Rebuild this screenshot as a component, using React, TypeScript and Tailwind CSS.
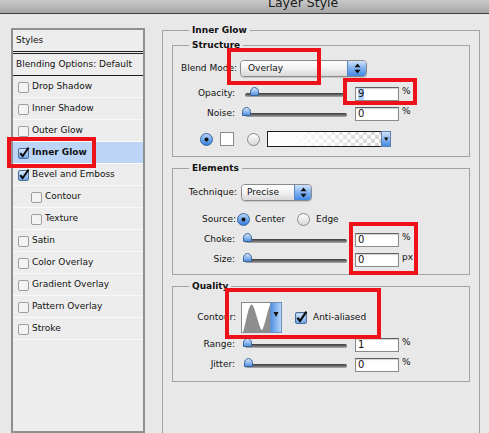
import React from "react";

function Check({ checked, big }: { checked: boolean; big?: boolean }) {
  const s = big ? 13 : 12;
  if (!checked)
    return (
      <svg width={s} height={s} viewBox="0 0 12 12" className="shrink-0">
        <rect x="0.5" y="1.5" width="10" height="10" rx="1.5" fill="#f3f3f3" stroke="#9d9d9d" />
      </svg>
    );
  return (
    <svg width={s} height={s} viewBox="0 0 12 12" className="shrink-0 overflow-visible">
      <defs>
        <linearGradient id="cbg" x1="0" y1="0" x2="0" y2="1">
          <stop offset="0" stopColor="#dcebfd" />
          <stop offset="1" stopColor="#6da4e8" />
        </linearGradient>
      </defs>
      <rect x="0.5" y="1.5" width="10" height="10" rx="1.5" fill="url(#cbg)" stroke="#4a6d9c" />
      <path d="M2.2 6.2 L4.6 9.2 L10.6 0.6" fill="none" stroke="#0a0a0a" strokeWidth="2" />
    </svg>
  );
}

function Radio({ on }: { on: boolean }) {
  return (
    <svg width="13" height="13" viewBox="0 0 13 13" className="shrink-0">
      <defs>
        <linearGradient id="ron" x1="0" y1="0" x2="0" y2="1">
          <stop offset="0" stopColor="#b9d8fb" />
          <stop offset="1" stopColor="#2f78de" />
        </linearGradient>
        <linearGradient id="roff" x1="0" y1="0" x2="0" y2="1">
          <stop offset="0" stopColor="#ffffff" />
          <stop offset="1" stopColor="#d6d6d6" />
        </linearGradient>
      </defs>
      <circle cx="6.5" cy="6.5" r="6" fill={on ? "url(#ron)" : "url(#roff)"} stroke={on ? "#3c659e" : "#8a8a8a"} />
      {on && <circle cx="6.5" cy="6.5" r="2" fill="#111" />}
    </svg>
  );
}

function Popup({ label, w, btn, pl }: { label: string; w: string; btn: string; pl: string }) {
  return (
    <div className={`${w} h-[17px] flex rounded-[4px] border border-[#8a8a8a] overflow-hidden shadow-[0_1px_1px_rgba(0,0,0,0.15)]`}>
      <div className={`flex-1 flex items-center ${pl} bg-linear-to-b from-[#ffffff] via-[#f1f1f1] to-[#d8d8d8]`}>
        {label}
      </div>
      <div className={`${btn} flex items-center justify-center bg-linear-to-b from-[#cfe3fb] via-[#7fb1ef] to-[#3f87e2] border-l border-[#5a86c0]`}>
        <svg width="7" height="11" viewBox="0 0 7 11">
          <path d="M3.5 0.5 L6.5 4.2 H0.5Z M3.5 10.5 L6.5 6.8 H0.5Z" fill="#111" />
        </svg>
      </div>
    </div>
  );
}

function Field({ value, sel }: { value: string; sel?: boolean }) {
  return (
    <div className="w-[44px] h-[14px] bg-white border border-[#8a8a8a] border-t-[#5e5e5e] flex items-center pl-[2px] text-[10px] leading-[12px] shadow-[inset_0_1px_1px_rgba(0,0,0,0.18)]">
      <span className={sel ? "bg-[#b4d3fb]" : ""}>{value}</span>
    </div>
  );
}

function Slider({ pos }: { pos: string }) {
  return (
    <div className="relative w-[109px] h-[15px] pl-[5px] pt-[7px]">
      <div className="w-[102px] h-[4px] rounded-full bg-linear-to-b from-[#3c3c3c] via-[#6a6a6a] to-[#b0b0b0]" />
      <svg width="9" height="9" viewBox="0 0 9 9" className={`absolute top-[1px] ${pos}`}>
        <defs>
          <linearGradient id="thumb" x1="0" y1="0" x2="0" y2="1">
            <stop offset="0" stopColor="#dcebfd" />
            <stop offset="1" stopColor="#4a8ce0" />
          </linearGradient>
        </defs>
        <path d="M4.5 0.5 C6.5 0.5 8.5 2.5 8.5 4.5 V8.5 H0.5 V4.5 C0.5 2.5 2.5 0.5 4.5 0.5Z" fill="url(#thumb)" stroke="#3b6497" />
      </svg>
    </div>
  );
}

function SliderRow({ label, pos, value, unit, sel, mt }: { label: string; pos: string; value: string; unit: string; sel?: boolean; mt: string }) {
  return (
    <div className={`${mt} flex items-center h-[15px]`}>
      <span className="w-[62px] text-right">{label}</span>
      <div className="ml-[5px]">
        <Slider pos={pos} />
      </div>
      <div className="ml-[6px]">
        <Field value={value} sel={sel} />
      </div>
      <span className="ml-[3px] self-start leading-[10px]">{unit}</span>
    </div>
  );
}

const items: { label: string; checked?: boolean; selected?: boolean; indent?: boolean }[] = [
  { label: "Drop Shadow" },
  { label: "Inner Shadow" },
  { label: "Outer Glow" },
  { label: "Inner Glow", checked: true, selected: true },
  { label: "Bevel and Emboss", checked: true },
  { label: "Contour", indent: true },
  { label: "Texture", indent: true },
  { label: "Satin" },
  { label: "Color Overlay" },
  { label: "Gradient Overlay" },
  { label: "Pattern Overlay" },
  { label: "Stroke" },
];

function LeftPanel() {
  return (
    <div className="ml-[11px] mt-[14px] w-[134px] h-[405px] shrink-0 border-2 border-[#8f8f8f] bg-[#ededed]">
      <div className="h-[21px] flex items-center pl-[3px]">Styles</div>
      <div className="h-[3px] border-y border-[#1e1e1e]" />
      <div className="h-[22px] flex items-center pl-[3px] border-b border-[#1e1e1e]">Blending Options: Default</div>
      {items.map((it) => (
        <div
          key={it.label}
          className={`h-[22px] flex items-center gap-[2px] border-b border-[#fafafa] ${it.indent ? "pl-[18px]" : "pl-[5px]"} ${it.selected ? "bg-[#bcd5f6] font-bold" : ""}`}
        >
          <Check checked={!!it.checked} />
          <span>{it.label}</span>
        </div>
      ))}
    </div>
  );
}

function RightPanel() {
  return (
    <fieldset className="ml-[17px] mt-[10px] w-[318px] h-[420px] shrink-0 border border-[#a3a3a3] pl-[9px]">
      <legend className="ml-[17px] px-[3px] font-bold leading-[12px]">Inner Glow</legend>

      <fieldset className="mt-[3px] w-[298px] h-[118px] border border-[#a3a3a3]">
        <legend className="ml-[16px] px-[3px] font-bold leading-[12px]">Structure</legend>
        <div className="mt-[9px] flex items-center h-[17px]">
          <span className="w-[64px] text-right">Blend Mode:</span>
          <div className="ml-[3px]">
            <Popup label="Overlay" w="w-[127px]" btn="w-[19px]" pl="pl-[7px]" />
          </div>
        </div>
        <SliderRow mt="mt-[9px]" label="Opacity:" pos="left-[10px]" value="9" unit="%" sel />
        <SliderRow mt="mt-[5px]" label="Noise:" pos="left-[2px]" value="0" unit="%" />
        <div className="mt-[10px] flex items-center h-[16px] pl-[27px]">
          <Radio on />
          <div className="ml-[7px] w-[14px] h-[14px] bg-white border border-[#8a8a8a]" />
          <div className="ml-[13px]">
            <Radio on={false} />
          </div>
          <svg width="124" height="16" viewBox="0 0 124 16" className="ml-[7px]">
            <defs>
              <pattern id="chk" width="8" height="8" patternUnits="userSpaceOnUse">
                <rect width="8" height="8" fill="#ffffff" />
                <rect width="4" height="4" fill="#d2d2d2" />
                <rect x="4" y="4" width="4" height="4" fill="#d2d2d2" />
              </pattern>
              <linearGradient id="fade" x1="0" y1="0" x2="1" y2="0">
                <stop offset="0" stopColor="#ffffff" stopOpacity="1" />
                <stop offset="0.25" stopColor="#ffffff" stopOpacity="0.9" />
                <stop offset="1" stopColor="#ffffff" stopOpacity="0" />
              </linearGradient>
              <linearGradient id="btn" x1="0" y1="0" x2="0" y2="1">
                <stop offset="0" stopColor="#d3e5fb" />
                <stop offset="1" stopColor="#3f86e2" />
              </linearGradient>
            </defs>
            <rect x="0.5" y="0.5" width="114" height="15" fill="url(#chk)" />
            <rect x="0.5" y="0.5" width="114" height="15" fill="url(#fade)" stroke="#1e1e1e" />
            <rect x="114.5" y="0.5" width="9" height="15" fill="url(#btn)" stroke="#5b7fb0" />
            <path d="M117 6.5 H121.5 L119.25 10Z" fill="#111" />
          </svg>
        </div>
      </fieldset>

      <fieldset className="mt-[5px] w-[298px] h-[113px] border border-[#a3a3a3]">
        <legend className="ml-[16px] px-[3px] font-bold leading-[12px]">Elements</legend>
        <div className="mt-[10px] flex items-center h-[17px]">
          <span className="w-[64px] text-right">Technique:</span>
          <div className="ml-[4px]">
            <Popup label="Precise" w="w-[71px]" btn="w-[17px]" pl="pl-[5px]" />
          </div>
        </div>
        <div className="mt-[12px] flex items-center h-[13px]">
          <span className="w-[63px] text-right">Source:</span>
          <div className="ml-[1px]">
            <Radio on />
          </div>
          <span className="ml-[5px] w-[42px]">Center</span>
          <Radio on={false} />
          <span className="ml-[6px]">Edge</span>
        </div>
        <SliderRow mt="mt-[6px]" label="Choke:" pos="left-[3px]" value="0" unit="%" />
        <SliderRow mt="mt-[5px]" label="Size:" pos="left-[3px]" value="0" unit="px" />
      </fieldset>

      <fieldset className="mt-[5px] w-[298px] h-[102px] border border-[#a3a3a3]">
        <legend className="ml-[16px] px-[3px] font-bold leading-[12px]">Quality</legend>
        <div className="mt-[10px] flex items-center h-[30px]">
          <span className="w-[63px] text-right">Contour:</span>
          <svg width="41" height="31" viewBox="0 0 41 31" className="ml-[5px]">
            <defs>
              <linearGradient id="btn2" x1="0" y1="0" x2="1" y2="0">
                <stop offset="0" stopColor="#4d8fe3" />
                <stop offset="1" stopColor="#bcd8fa" />
              </linearGradient>
            </defs>
            <rect x="0.5" y="0.5" width="40" height="30" fill="#ffffff" stroke="#8a8a8a" />
            <path d="M2 30 C5 22 7 4 10.5 2.5 C13.5 2.5 17 22 20.5 28 C23 28 26 10 29 3 V30 Z" fill="#8e8e8e" />
            <rect x="29.5" y="0.5" width="11" height="30" fill="url(#btn2)" stroke="#6b8fbf" />
            <path d="M32.5 10 H37.5 L35 15Z" fill="#111" />
          </svg>
          <div className="ml-[13px]">
            <Check checked big />
          </div>
          <span className="ml-[5px]">Anti-aliased</span>
        </div>
        <SliderRow mt="mt-[5px]" label="Range:" pos="left-[3px]" value="1" unit="%" />
        <SliderRow mt="mt-[5px]" label="Jitter:" pos="left-[4px]" value="0" unit="%" />
      </fieldset>
    </fieldset>
  );
}

export default function App() {
  return (
    <div className="relative w-[489px] h-[433px] overflow-hidden bg-[#e8e8e8] text-[9px] leading-[11px] text-[#111] font-['DejaVu_Sans',sans-serif]">
      <div className="h-[14px] overflow-hidden border-b border-[#3e3e3e] bg-linear-to-b from-[#c9c9c9] to-[#a6a6a6]">
        <div className="ml-[268px] -mt-[4px] text-[12.5px] leading-[14px] text-[#1a1a1a]">Layer Style</div>
      </div>
      <div className="flex">
        <LeftPanel />
        <RightPanel />
      </div>

      <div className="absolute left-[7px] top-[137px] w-[89px] h-[31px] border-[4px] border-[#ee1119]" />
      <div className="absolute left-[227px] top-[48px] w-[94px] h-[37px] border-[4px] border-[#ee1119]" />
      <div className="absolute left-[343px] top-[78px] w-[74px] h-[27px] border-[4px] border-[#ee1119]" />
      <div className="absolute left-[349px] top-[222px] w-[69px] h-[53px] border-[4px] border-[#ee1119]" />
      <div className="absolute left-[225px] top-[288px] w-[156px] h-[51px] border-[4px] border-[#ee1119]" />
    </div>
  );
}
